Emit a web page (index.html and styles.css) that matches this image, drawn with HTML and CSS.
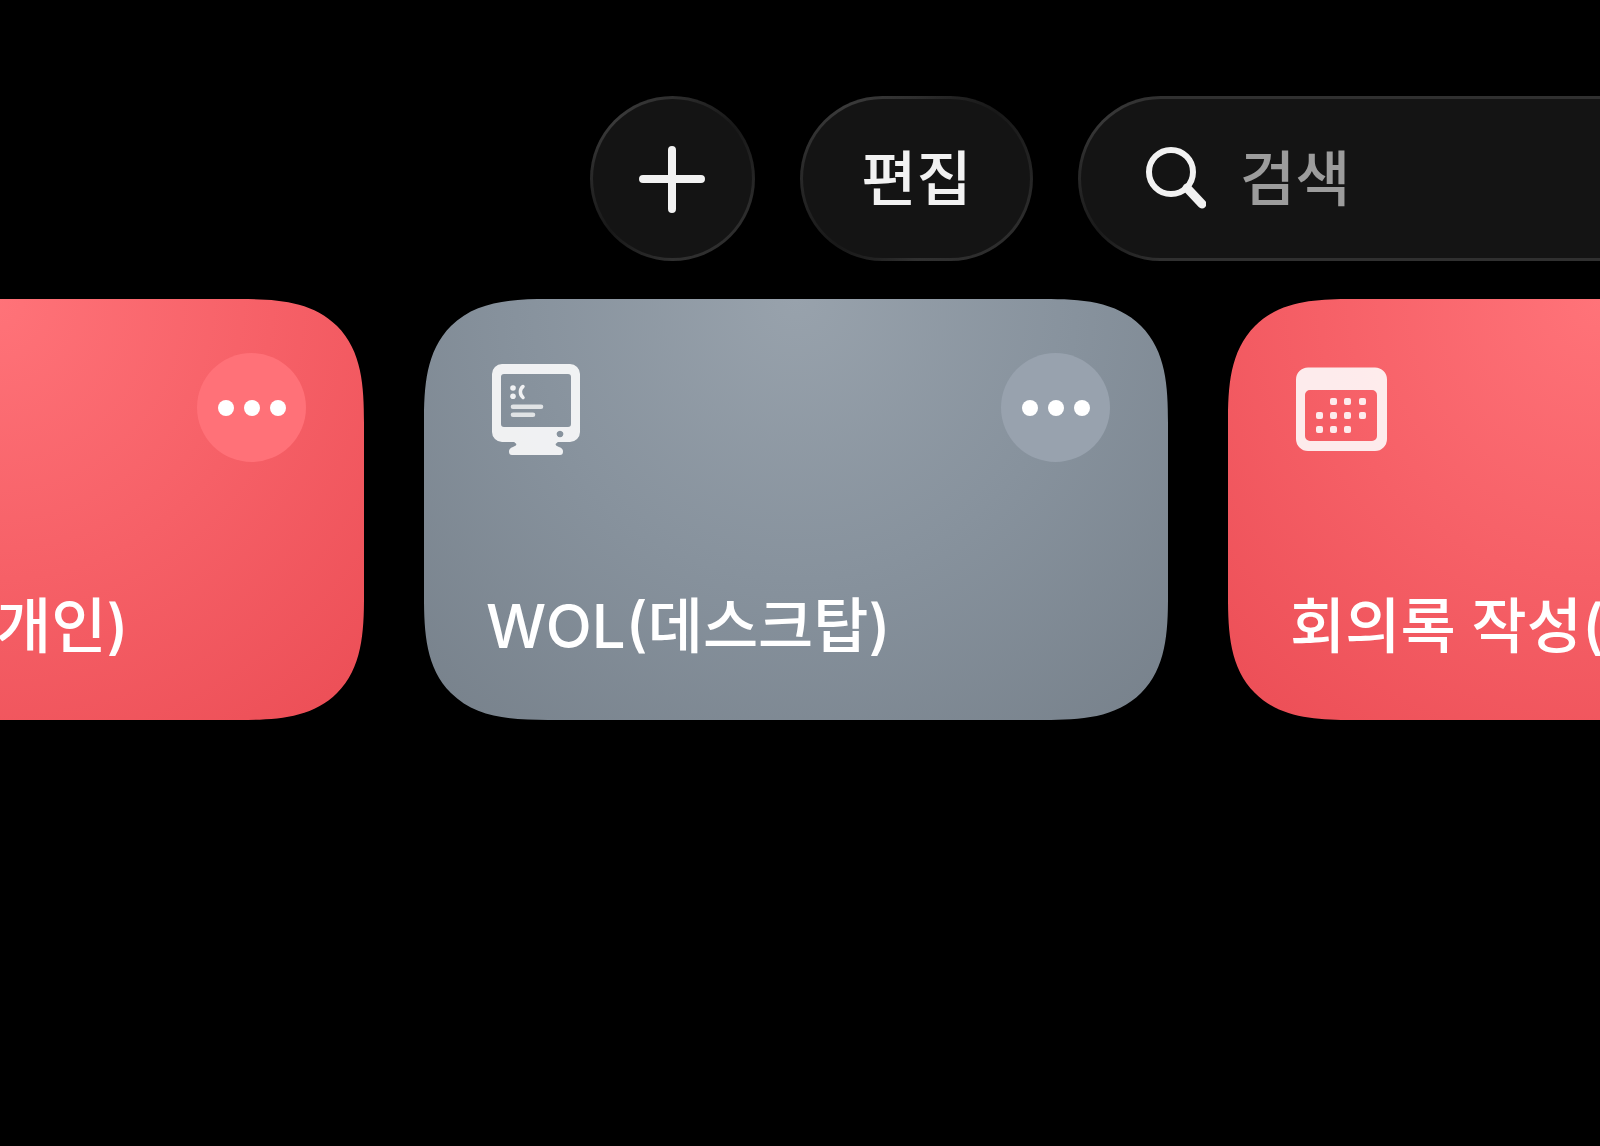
FILE: index.html
```html
<!DOCTYPE html>
<html lang="ko">
<head>
  <meta charset="UTF-8" />
  <meta name="viewport" content="width=device-width, initial-scale=1" />
  <title>단축어</title>
  <link rel="stylesheet" href="styles.css">
</head>
<body>

  <header class="toolbar">
    <button class="pill add" type="button" aria-label="추가">
      <svg viewBox="0 0 68 68" width="68" height="68">
        <path d="M33 5V64M4 34H62" fill="none" stroke="#f2f2f2" stroke-width="8" stroke-linecap="round" />
      </svg>
    </button>
    <button class="pill edit" type="button">편집</button>
    <label class="pill search">
      <svg viewBox="0 0 62 64" width="62" height="64">
        <circle cx="27" cy="25" r="22" fill="none" stroke="#f2f2f2" stroke-width="6" />
        <path d="M43 41L58 57" fill="none" stroke="#f2f2f2" stroke-width="9" stroke-linecap="round" />
      </svg>
      <input type="search" placeholder="검색" aria-label="검색">
    </label>
  </header>

  <main class="cards">
    <article class="card red">
      <div class="card-head">
        <svg class="icon" viewBox="0 0 104 109">
          <path fill-rule="evenodd" d="M18 14H85a12 12 0 0 1 12 12V86a12 12 0 0 1-12 12H18a12 12 0 0 1-12-12V26a12 12 0 0 1 12-12ZM20 37a5 5 0 0 0-5 5V83a5 5 0 0 0 5 5H82a5 5 0 0 0 5-5V42a5 5 0 0 0-5-5Z" />
        </svg>
        <button class="more" type="button" aria-label="더 보기"><i></i><i></i><i></i></button>
      </div>
      <h2>회의록 작성(개인)</h2>
    </article>

    <article class="card gray">
      <div class="card-head">
        <svg class="icon" viewBox="0 0 104 109">
          <path fill-rule="evenodd" d="M16 11H84a10 10 0 0 1 10 10V79a10 10 0 0 1-10 10H16a10 10 0 0 1-10-10V21a10 10 0 0 1 10-10ZM18 21a3 3 0 0 0-3 3V71a3 3 0 0 0 3 3H82a3 3 0 0 0 3-3V24a3 3 0 0 0-3-3ZM74 77.700a3.300 3.300 0 1 0 .01 0Z" />
          <path d="M27 88.500C31.500 91 31.500 92 27 94C24 95 23 96.500 23 98.500Q23 102 26 102H74Q77 102 77 98.500C77 96.500 76 95 73 94C68.500 92 68.500 91 73 88.500Z" />
          <circle cx="27" cy="35" r="2.800" />
          <circle cx="27" cy="43.300" r="2.800" />
          <path class="line" d="M37 33.500C33.500 36 33.500 41.500 37 44.500" stroke-width="3.500" />
          <path class="line soft" d="M27 53.700H55M27 61.700H47" stroke-width="4.600" />
        </svg>
        <button class="more" type="button" aria-label="더 보기"><i></i><i></i><i></i></button>
      </div>
      <h2>WOL(데스크탑)</h2>
    </article>

    <article class="card red">
      <div class="card-head">
        <svg class="icon" viewBox="0 0 104 109">
          <path fill-rule="evenodd" d="M18 14.500H85a12 12 0 0 1 12 12V86a12 12 0 0 1-12 12H18a12 12 0 0 1-12-12V26.500a12 12 0 0 1 12-12ZM20 37a5 5 0 0 0-5 5V83a5 5 0 0 0 5 5H82a5 5 0 0 0 5-5V42a5 5 0 0 0-5-5Z" />
          <g>
            <rect x="40" y="45" width="7" height="7" rx="2" />
            <rect x="54" y="45" width="7" height="7" rx="2" />
            <rect x="69" y="45" width="7" height="7" rx="2" />
            <rect x="26" y="59" width="7" height="7" rx="2" />
            <rect x="40" y="59" width="7" height="7" rx="2" />
            <rect x="54" y="59" width="7" height="7" rx="2" />
            <rect x="69" y="59" width="7" height="7" rx="2" />
            <rect x="26" y="73" width="7" height="7" rx="2" />
            <rect x="40" y="73" width="7" height="7" rx="2" />
            <rect x="54" y="73" width="7" height="7" rx="2" />
          </g>
        </svg>
        <button class="more" type="button" aria-label="더 보기"><i></i><i></i><i></i></button>
      </div>
      <h2>회의록 작성(</h2>
    </article>
  </main>

</body>
</html>
```
FILE: styles.css
```css
* {
  box-sizing: border-box;
  margin: 0;
  padding: 0;
}

body {
  font-family: Inter, 'Noto Sans CJK KR', sans-serif;
  font-size: 60px;
  font-weight: 500;
  line-height: 72px;
  background: #000;
  color: #fff;
  min-height: 100vh;
  overflow: hidden;
}

button,
input {
  font: inherit;
  color: inherit;
  border: none;
  background: none;
}

/* barra superior */
.toolbar {
  display: flex;
  gap: 45px;
  padding: 96px 0 38px 590px;
}

.pill {
  --rim: conic-gradient(#2e2e2e 0deg, #181818 50deg, #2c2c2c 110deg, #303030 180deg, #181818 230deg, #2c2c2c 280deg, #3a3a3a 315deg, #2e2e2e 360deg);
  display: flex;
  align-items: center;
  justify-content: center;
  flex-shrink: 0;
  height: 165px;
  border: 3px solid transparent;
  border-radius: 84px;
  background: linear-gradient(#141414, #141414) padding-box, var(--rim) border-box;
  color: #f2f2f2;
}

.add {
  width: 165px;
}

.edit {
  width: 233px;
}

.search {
  --rim: conic-gradient(at 82px 50%, #303030 0deg, #303030 180deg, #1a1a1a 230deg, #2a2a2a 280deg, #383838 315deg, #303030 360deg);
  flex: 1 0 600px;
  justify-content: flex-start;
  gap: 34px;
  padding-left: 63px;
}

.search input {
  flex: 1;
  min-width: 0;
  outline: none;
  appearance: none;
}

.search input::placeholder {
  color: #9c9c9c;
  opacity: 1;
}

/* tarjetas */
.cards {
  display: flex;
  justify-content: center;
  gap: 60px;
  padding-right: 8px;
}

.card {
  display: flex;
  flex-direction: column;
  justify-content: space-between;
  flex: 0 0 744px;
  min-height: 421px;
  padding: 54px 58px 58px 62px;
  border-radius: 92px;
}

/* esquinas continuas */
@supports (corner-shape: squircle) {
  .card {
    border-radius: 124px;
    corner-shape: superellipse(1.5);
  }
}

.red {
  background: radial-gradient(circle at 50% 0, #ff7379, #f66067 280px, #ed5058 520px);
}

.gray {
  background: radial-gradient(circle at 50% 0, #98a2ac, #87929d 280px, #77818b 560px);
}

.card-head {
  display: flex;
  justify-content: space-between;
}

.icon {
  width: 104px;
  height: 109px;
  fill: #fff;
  opacity: 0.88;
}

.icon .line {
  fill: none;
  stroke: #fff;
  stroke-linecap: round;
}

.icon .soft {
  opacity: 0.85;
}

.more {
  display: flex;
  align-items: center;
  justify-content: center;
  gap: 10px;
  width: 109px;
  height: 109px;
  border-radius: 50%;
}

.red .more {
  background: #ff7178;
}

.gray .more {
  background: #98a2ae;
}

.more i {
  width: 16px;
  height: 16px;
  border-radius: 50%;
  background: #fff;
}

h2 {
  font-size: inherit;
  font-weight: 500;
  white-space: nowrap;
}
```
